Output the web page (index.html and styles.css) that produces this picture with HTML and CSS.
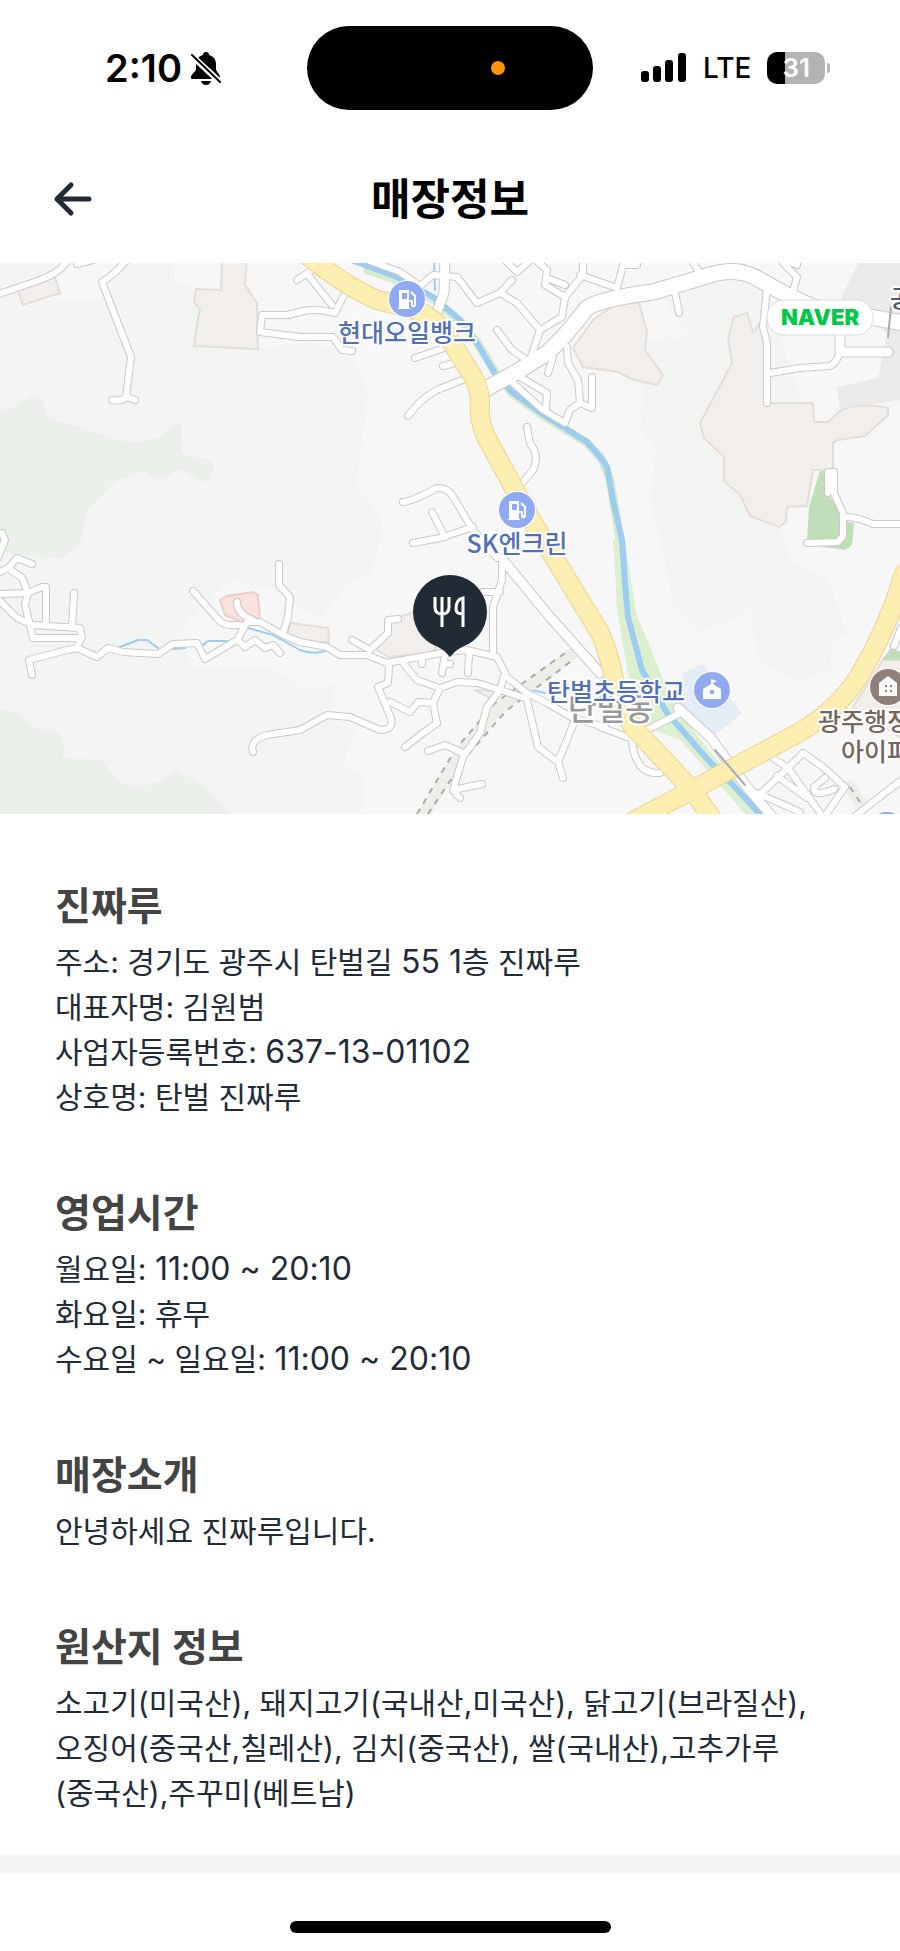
FILE: index.html
```html
<!DOCTYPE html>
<html lang="ko">
<head>
    <meta charset="UTF-8">
    <meta name="viewport" content="width=device-width, initial-scale=1.0">
    <title>매장정보</title>
    <link rel="stylesheet" href="styles.css">
</head>
<body>
    <div class="status-bar">
        <div class="status-left">
            <span class="time">2:10</span>
            <svg class="bell" viewBox="0 0 32 33" aria-hidden="true">
                <path d="M16 0c-2 0-3 1-3 3-4 1-7 4-7 9v5c0 3-5 5-5 8 0 1 0 2 1 2h27c1 0 1-1 1-2 0-3-4-5-4-8v-5c0-5-3-8-7-9 0-2-1-3-3-3z"/>
                <path d="M11 29h10c-1 3-3 4-5 4s-4-1-5-4z"/>
                <path class="bell-gap" d="M1 3l30 28"/>
                <path class="bell-slash" d="M2 3l28 27"/>
            </svg>
        </div>
        <div class="island"><span class="island-dot"></span></div>
        <div class="status-right">
            <svg class="signal" viewBox="0 0 46 30" aria-hidden="true">
                <rect x="0" y="18" width="8" height="11" rx="3"/>
                <rect x="12" y="13" width="8" height="16" rx="3"/>
                <rect x="24" y="7" width="8" height="22" rx="3"/>
                <rect x="37" y="0" width="8" height="29" rx="3"/>
            </svg>
            <span class="network">LTE</span>
            <span class="battery">31</span>
        </div>
    </div>

    <header class="header">
        <button type="button" class="back-btn" aria-label="뒤로">
            <svg viewBox="0 0 40 36" aria-hidden="true">
                <path d="M36 18H4M18 4L4 18l14 14"/>
            </svg>
        </button>
        <h1>매장정보</h1>
    </header>

    <svg class="map" viewBox="0 263 900 551" preserveAspectRatio="xMidYMid slice" role="img" aria-label="매장 위치 지도">
        <defs>
            <g id="lanes">
                <path d="M-4 295L40 280Q60 273 70 258M128 258Q118 272 102 282L131 357 126 397M112 400Q120 402 127 397L135 400M77 264L93 260"/>
                <path d="M304 311L287 315H262L260 332 300 337H333L342 350 352 351M297 280L312 270M308 275L332 305M290 315Q310 306 335 313L345 293"/>
                <path d="M415 358L447 347M443 366L455 363M408 416Q420 399 437 390L462 380"/>
                <path d="M362 258L400 272 420 286 433 275 457 277 477 303 500 293 512 280M500 293L517 303 540 330 530 360M540 330L562 317 565 297 583 275V258"/>
                <path d="M565 297L545 285 547 270 533 258 517 272 503 258M547 278L565 285M580 275L600 282 617 288 623 265 637 265"/>
                <path d="M497 330L512 350 527 360M553 357L548 373M567 347L568 363 578 380 580 403 592 408V377M580 403L570 410 565 423 543 410 513 383M520 377L547 393 546 408"/>
                <path d="M527 427L530 443Q540 456 533 470L522 483M403 502Q413 501 437 488 446 487 452 495L473 530 497 558M432 512L445 537M413 543L440 538 473 527"/>
                <path d="M690 258L698 270M675 292L679 313M783 263L797 277 793 292M797 265L786 260M767 288L763 327 767 343V403M770 373L800 368 830 366Q838 362 840 350"/>
                <path d="M828 493V472H834V493L843 513V536L838 542 807 543M847 517Q857 517 873 524H904"/>
                <path d="M2 533L5 540 -4 562M-2 573L8 568 17 558 32 564M8 568L22 578 28 593 25 605 33 638H78M-3 594L28 593 42 587H46V623M-3 598L17 618 33 625 80 628 82 637 77 648 97 657 108 648 123 652 158 654 173 644 197 643 205 659 237 640 247 622 260 622 283 635 300 642 327 647 340 655 367 655 387 663 447 652 467 650 497 657 507 677 527 693 547 703 573 718 605 727"/>
                <path d="M74 593L72 627M32 675L29 660 67 650 78 648M193 591L217 618Q223 627 240 625M237 602Q237 614 253 620M279 564V585L290 597 288 617 283 633M238 640L245 647 255 640 265 648 273 645 280 653"/>
                <path d="M253 752Q249 740 267 735L300 730 327 715 350 717 380 730Q394 730 391 718L378 687 388 683 389 665M352 640L370 650 388 633V620L398 619"/>
                <path d="M403 663L417 680 440 688 457 682 477 683 500 690 525 698M505 673L500 690 487 707 480 733 463 757 453 790 460 798M453 790L482 784M428 751L445 745 463 753M440 688L433 703 437 723 423 733 405 747M390 702L410 712 418 702 433 703"/>
                <path d="M445 655L442 673M444 664H450M469 653L468 673M422 657V664M502 557V580L493 607V653M483 592H500M527 700L538 747 558 762 563 778M558 762L575 720"/>
                <path d="M600 727L627 737 653 727 682 712M632 740Q635 775 660 773M773 758L788 768 803 753 823 767 845 787 827 813M788 768L757 797M788 768L823 817M757 793L800 812M807 798L777 776M834 789Q813 798 814 787L825 778M850 820L904 778M894 646L901 628"/>
            </g>
            <g id="streets">
                <path d="M445 258L444 293 437 312M840 335V352H888"/>
                <path d="M503 560L550 617 600 673M678 708L710 737 747 787 775 820"/>
            </g>
            <path id="avenue" d="M480 392L520 370 547 353Q565 337 587 308 600 299 653 292L710 275Q739 266 760 280L787 295 813 307 904 323"/>
            <g id="highways">
                <path d="M304 253L322 267Q350 288 377 300L410 308Q434 316 447 335L467 367Q480 385 480 402 478 425 490 444L533 523 600 633Q608 650 615 683 620 704 633 727L692 790 716 824"/>
                <path d="M624 826L692 790 800 732Q837 710 858 678 888 628 904 574"/>
            </g>
            <g id="pump">
                <circle r="19" class="poi-ring"/>
                <circle r="18" class="poi-blue"/>
                <path class="poi-glyph" d="M-8-9h10v18h1v1H-9V9h1z"/>
                <path class="poi-cut" d="M-5-6h5v6h-5z"/>
                <path class="poi-line" d="M4-7l4 4v9q-2 3-3 0V2H2"/>
            </g>
        </defs>

        <rect class="land" x="-500" y="0" width="1900" height="1100"/>
        <path class="woods" d="M0 263H173L175 280 193 285 258 347 300 343 350 347 367 393 363 437 357 487 380 517 382 540 370 573 350 583 320 617 270 590 230 580 183 625 190 665 270 665 300 687 333 687 335 720 355 730 343 767 362 773V814H0z"/>
        <path class="land" d="M30 303L100 300 128 263H72L60 275z"/>
        <path class="woods" d="M655 290L727 277 763 287 800 393V430L780 530 790 560 830 580 847 633 830 645 832 668 800 683 760 663 750 610 700 633 673 607 660 540 650 500 655 447 640 430 643 387 620 383 650 340 690 335z"/>
        <path class="forest" d="M0 412L17 407Q32 388 43 403L48 418 80 428 117 440Q145 444 160 437L180 421 181 450Q184 460 210 459L213 467 209 483 177 469Q160 485 143 470L113 483 88 510 80 543 63 558 30 555 0 553z"/>
        <path class="forest" d="M0 710L17 712 32 728 60 733Q66 742 63 758L103 760Q115 785 135 788 155 785 177 771L200 783 230 814H0z"/>
        <path class="district" d="M860 260L840 300 887 333 878 378 837 387 840 410 900 400V260z"/>

        <g class="block">
            <path d="M18 290L55 277 60 293 23 305zM222 258L221 290 196 289 194 302 200 310 197 323 194 346 258 349 257 303 245 285 247 258z"/>
            <path d="M573 348L583 367 618 372 632 379 657 385 663 375 645 350 647 332 639 303 618 302 593 320z"/>
            <path d="M747 313L734 317 728 338 732 363 700 423 704 438 724 457V481L740 495 750 516 779 527 786 522 787 507 807 506 813 470H833V443L838 440 865 436 888 415V408Q855 402 840 411L828 422H814L813 403H770L763 320 753 332z"/>
            <path d="M290 623L328 628 329 642 300 644 288 635zM388 657L377 650 390 620 420 610 440 640 433 653zM475 690L500 691 490 698zM883 660H904V740L853 707z"/>
        </g>
        <path class="clinic" d="M220 600L227 596 253 592 258 595 260 620 243 623 225 615z"/>
        <path class="school" d="M683 673L702 664 742 713 713 737 680 707z"/>
        <path class="park" d="M820 471H826L827 493 840 510V539H807L809 507zM847 522L854 523 852 545 845 550 810 545 840 540zM890 649L904 652V660H882z"/>

        <path class="bank" d="M368 270L397 280 433 299 460 321 478 344 498 377 513 394 547 418 587 443 602 459 610 480 620 540"/>
        <path class="bank-fill" d="M613 540L625 540 636 613 650 647 662 677 677 710 717 760 770 820H750L707 770 680 740 647 727 628 673 617 610z"/>
        <path class="river" d="M354 261L397 277 433 297 460 320 477 343 497 377 513 393 547 417 587 442 600 457 607 467 613 500 622 540 625 583 628 617 642 670 667 713 710 762 733 785 765 820"/>
        <path class="stream" d="M434 260L435 290M120 647L138 640H147L158 648M173 649L185 648M203 645L208 641H227M248 628L273 635 300 650M300 650Q313 655 325 651M532 690L545 693"/>

        <path class="rail" d="M422 818L460 753 500 707 572 654M850 787L862 805"/>
        <path class="rail-edge" d="M417 814L455 750 495 703 568 651M428 814L466 757 506 711 574 659M850 787L862 805"/>

        <use href="#lanes" class="lane-casing"/>
        <use href="#streets" class="street-casing"/>
        <use href="#avenue" class="avenue-casing"/>
        <use href="#lanes" class="lane"/>
        <use href="#streets" class="street"/>
        <use href="#avenue" class="avenue"/>
        <use href="#highways" class="highway-casing"/>
        <use href="#highways" class="highway"/>
        <path class="footbridge" d="M715 750L745 785M891 307L888 337"/>

        <text class="label town" x="568" y="720">탄벌동</text>
        <text class="label blue" x="407" y="342" text-anchor="middle">현대오일뱅크</text>
        <text class="label blue" x="517" y="553" text-anchor="middle">SK엔크린</text>
        <text class="label blue" x="616" y="701" text-anchor="middle">탄벌초등학교</text>
        <text class="label brown" x="818" y="731">광주행정</text>
        <text class="label brown" x="841" y="761">아이파</text>
        <text class="label slate" x="890" y="308">공</text>

        <use href="#pump" x="407" y="299"/>
        <use href="#pump" x="517" y="510"/>
        <g transform="translate(712 690)">
            <circle r="19" class="poi-ring"/>
            <circle r="18" class="poi-blue"/>
            <path class="poi-glyph" d="M-9 9V-1L-1-6V-11L5-9 1-7V-6L9-1V9z"/>
            <path class="poi-cut" d="M-2 0h4v4h-4z"/>
        </g>
        <g transform="translate(888 687)">
            <circle r="19" class="poi-ring"/>
            <circle r="18" class="poi-brown"/>
            <path class="poi-glyph" d="M-9 9V-4L0-11 9-4V9z"/>
            <path class="poi-cut brown-cut" d="M-3-2h2v2h-2zM2-2h2v2H2zM-3 3h2v2h-2zM2 3h2v2H2z"/>
        </g>
        <circle class="poi-blue" cx="887" cy="830" r="18"/>

        <rect class="naver-pill" x="767" y="300" width="106" height="35" rx="17"/>
        <text class="naver" x="820" y="325" text-anchor="middle">NAVER</text>

        <path class="pin" d="M450 575a37 37 0 0 1 12 72Q457 649 450 657 443 649 438 647A37 37 0 0 1 450 575z"/>
        <path class="pin-glyph" d="M435 597v10q0 7 7 7t7-7v-10M442 597v30M463 627v-29q-7 1-7 11 0 5 7 5"/>
    </svg>

    <main class="info">
        <section>
            <h2>진짜루</h2>
            <p>주소: 경기도 광주시 탄벌길 <span class="num">55 1</span>층 진짜루</p>
            <p>대표자명: 김원범</p>
            <p>사업자등록번호: <span class="num">637-13-01102</span></p>
            <p>상호명: 탄벌 진짜루</p>
        </section>
        <section>
            <h2>영업시간</h2>
            <p>월요일: <span class="num">11:00 ~ 20:10</span></p>
            <p>화요일: 휴무</p>
            <p>수요일 ~ 일요일: <span class="num">11:00 ~ 20:10</span></p>
        </section>
        <section>
            <h2>매장소개</h2>
            <p>안녕하세요 진짜루입니다.</p>
        </section>
        <section>
            <h2>원산지 정보</h2>
            <p>소고기(미국산), 돼지고기(국내산,미국산), 닭고기(브라질산), 오징어(중국산,칠레산), 김치(중국산), 쌀(국내산),고추가루(중국산),주꾸미(베트남)</p>
        </section>
    </main>
    <div class="divider"></div>
    <footer class="home-area"><div class="home-indicator"></div></footer>
</body>
</html>
```
FILE: styles.css
```css
* {
    margin: 0;
    padding: 0;
    box-sizing: border-box;
}

body {
    font-family: Inter, "Noto Sans CJK KR", sans-serif;
    background: #fff;
    color: #222b37;
}

/* status bar */
.status-bar {
    display: grid;
    grid-template-columns: 1fr 286px 1fr;
    align-items: center;
    padding-top: 26px;
    color: #000;
}

.status-left {
    display: flex;
    justify-content: flex-end;
    align-items: center;
    gap: 8px;
    padding-right: 85px;
}

.time {
    font-size: 38px;
    font-weight: 600;
    line-height: 40px;
}

.bell {
    width: 32px;
    height: 33px;
}

.bell-gap {
    stroke: #fff;
    stroke-width: 6;
}

.bell-slash {
    stroke: #000;
    stroke-width: 2;
    stroke-linecap: round;
}

.island {
    display: flex;
    align-items: center;
    justify-content: flex-end;
    height: 84px;
    padding-right: 88px;
    border-radius: 42px;
    background: #000;
}

.island-dot {
    width: 14px;
    height: 14px;
    border-radius: 50%;
    background: #ff9500;
}

.status-right {
    display: flex;
    align-items: center;
    gap: 16px;
    padding-left: 48px;
}

.signal {
    width: 46px;
    height: 30px;
}

.network {
    font-size: 28px;
    font-weight: 500;
    line-height: 40px;
}

.battery {
    position: relative;
    width: 58px;
    height: 32px;
    border-radius: 10px;
    background: linear-gradient(to right, #000 18px, #b3b3b3 18px);
    color: #fff;
    font-size: 26px;
    font-weight: 600;
    line-height: 32px;
    text-align: center;
}

.battery::after {
    content: '';
    position: absolute;
    left: 60px;
    top: 11px;
    width: 3px;
    height: 10px;
    border-radius: 0 3px 3px 0;
    background: #b3b3b3;
}

/* header */
.header {
    display: grid;
    grid-template-columns: 40px 1fr 40px;
    align-items: center;
    height: 153px;
    padding: 24px 53px 0;
}

.back-btn {
    height: 36px;
    border: none;
    background: none;
    cursor: pointer;
}

.back-btn svg {
    display: block;
    width: 40px;
    height: 36px;
    fill: none;
    stroke: #222b37;
    stroke-width: 5;
    stroke-linecap: round;
    stroke-linejoin: round;
}

h1 {
    color: #000;
    font-size: 43px;
    font-weight: 700;
    line-height: 60px;
    text-align: center;
}

/* map */
.map {
    display: block;
    width: 100%;
    height: 551px;
}

.land { fill: #f7f7f7; }
.woods { fill: #f2f5f2; }
.forest { fill: #ebf0eb; }
.district { fill: #eaeaea; }
.school { fill: #e4ecf6; }
.park { fill: #c0dfb8; }

.block {
    fill: #f2eeeb;
    stroke: #e5ddd7;
    stroke-width: 2;
}

.clinic {
    fill: #fbe2de;
    stroke: #eecdc9;
    stroke-width: 2;
}

.bank,
.river,
.stream,
.rail,
.rail-edge,
.footbridge,
#lanes,
#streets,
#avenue,
#highways {
    fill: none;
    stroke-linecap: round;
    stroke-linejoin: round;
}

.bank {
    stroke: #d5ecd0;
    stroke-width: 9;
}

.bank-fill { fill: #dcefd0; }

.river {
    stroke: #9ccdf0;
    stroke-width: 6;
}

.stream {
    stroke: #9ccdf0;
    stroke-width: 2;
}

.rail {
    stroke: #efede8;
    stroke-width: 12;
}

.rail-edge {
    stroke: #aaa;
    stroke-width: 2;
    stroke-dasharray: 6 6;
    stroke-linecap: butt;
}

.lane-casing {
    stroke: #c9c9c9;
    stroke-width: 8;
}

.lane {
    stroke: #fff;
    stroke-width: 6;
}

.street-casing {
    stroke: #c9c9c9;
    stroke-width: 11;
}

.street {
    stroke: #fff;
    stroke-width: 9;
}

.avenue-casing {
    stroke: #c9c9c9;
    stroke-width: 17;
}

.avenue {
    stroke: #fff;
    stroke-width: 15;
}

.highway-casing {
    stroke: #ebd394;
    stroke-width: 20;
}

.highway {
    stroke: #fcedb0;
    stroke-width: 18;
}

.footbridge {
    stroke: #aaa;
    stroke-width: 2;
}

.label {
    font-family: "Noto Sans CJK KR", sans-serif;
    font-size: 25px;
    font-weight: 500;
    paint-order: stroke;
    stroke: #fff;
    stroke-width: 4;
    stroke-linejoin: round;
}

.blue { fill: #5470b5; }
.brown { fill: #75665e; }
.slate { fill: #50566b; }

.town {
    font-size: 31px;
    fill: #999;
}

.poi-ring { fill: #fff; }
.poi-blue { fill: #8faaf0; }
.poi-brown { fill: #8f8179; }
.poi-glyph { fill: #fff; }
.poi-cut { fill: #8faaf0; }
.brown-cut { fill: #8f8179; }

.poi-line {
    fill: none;
    stroke: #fff;
    stroke-width: 2;
}

.naver-pill {
    fill: #fff;
    stroke: #ddd;
    stroke-width: 1;
}

.naver {
    fill: #03c74a;
    font-size: 22px;
    font-weight: 900;
}

.pin { fill: #212b36; }

.pin-glyph {
    fill: none;
    stroke: #fff;
    stroke-width: 3;
}

/* store info */
.info {
    display: flex;
    flex-direction: column;
    gap: 65px;
    padding: 64px 88px 39px 55px;
}

h2 {
    margin-bottom: 6px;
    color: #444;
    font-size: 39px;
    font-weight: 700;
    line-height: 56px;
}

p {
    font-size: 30px;
    line-height: 45px;
}

.num {
    font-size: 32px;
    line-height: 40px;
}

.divider {
    height: 18px;
    background: #f3f4f6;
}

.home-area {
    padding: 48px 0 18px;
}

.home-indicator {
    width: 321px;
    height: 12px;
    margin: 0 auto;
    border-radius: 6px;
    background: #000;
}
```
